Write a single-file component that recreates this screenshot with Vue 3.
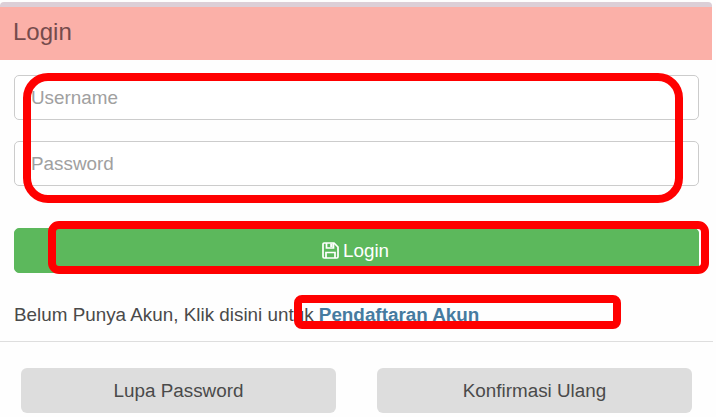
<script setup>
import { ref } from 'vue'

const form = ref({ username: '', password: '' })

function handleLogin() {
  form.value.password = ''
}
</script>

<template>
  <div class="login-page">
    <form class="panel" @submit.prevent="handleLogin">
      <div class="panel-heading">Login</div>
      <div class="panel-body">
        <input
          v-model="form.username"
          class="form-control"
          type="text"
          placeholder="Username"
        />
        <input
          v-model="form.password"
          class="form-control"
          type="password"
          placeholder="Password"
        />
        <button class="btn-login" type="submit">
          <svg class="icon-save" viewBox="0 0 17 17">
            <path
              d="M1 2.2V14.8Q1 16 2.2 16H14.8Q16 16 16 14.8V5L12 1H2.2Q1 1 1 2.2Z"
            />
            <path d="M4 16V10.5H13V16M4.5 1V6H11.5V1" />
            <path class="shutter" d="M8.2 1.5H10.6V5H8.2Z" />
          </svg>
          <span>Login</span>
        </button>
        <p class="register">
          Belum Punya Akun, Klik disini untuk
          <a class="register-link">Pendaftaran Akun</a>
        </p>
      </div>
    </form>
    <div class="actions">
      <button class="btn-default">Lupa Password</button>
      <button class="btn-default">Konfirmasi Ulang</button>
    </div>

    <!-- Highlight frames over the form -->
    <div class="mark mark-fields" />
    <div class="mark mark-login" />
    <div class="mark mark-register" />
  </div>
</template>

<style>
body {
  margin: 0;
  background: #fefefe;
}
</style>

<style scoped>
* {
  box-sizing: border-box;
}

.login-page {
  position: relative;
  width: 716px;
  height: 417px;
  padding-top: 2px;
  overflow: hidden;
  font-family: 'Liberation Sans', Arial, sans-serif;
  font-size: 18.85px;
  color: #4a4a4a;
}

.panel {
  width: 713px;
  height: 340px;
  border-bottom: 1px solid #dedede;
}

.panel-heading {
  width: 712px;
  height: 58px;
  padding-left: 13px;
  border-top: 5px solid #dccfd7;
  border-radius: 4px 4px 0 0;
  background: #fbb0a8;
  color: #754b4c;
  font-size: 24px;
  line-height: 49px;
}

.panel-body {
  display: flex;
  flex-direction: column;
  width: 699px;
  padding: 15px 0 0 14px;
}

.form-control {
  width: 100%;
  height: 45px;
  margin-bottom: 21px;
  padding: 0 16px;
  border: 1px solid #cccccc;
  border-radius: 5px;
  background: #fff;
  font: inherit;
  outline: none;
}

.form-control::placeholder {
  color: #a0a0a0;
  opacity: 1;
}

.btn-login {
  display: flex;
  align-items: center;
  justify-content: center;
  gap: 4px;
  height: 45px;
  margin-top: 21px;
  padding: 0 2px 0 0;
  border: 1px solid #5cb85c;
  border-radius: 5px;
  background: #5cb85c;
  color: #fff;
  font: inherit;
}

.icon-save {
  width: 17px;
  height: 17px;
  fill: none;
  stroke: #fff;
  stroke-width: 1.7;
}

.icon-save .shutter {
  fill: #fff;
  stroke: none;
}

.register {
  margin: 31px 0 0;
  line-height: 22px;
  white-space: nowrap;
}

.register-link {
  color: #467ba0;
  font-weight: bold;
}

.actions {
  display: flex;
  gap: 41px;
  padding: 26px 0 0 21px;
}

.btn-default {
  width: 315px;
  height: 45px;
  padding: 0;
  border: none;
  border-radius: 6px;
  background: #dddddd;
  color: #4a4a4a;
  font: inherit;
}

.mark {
  position: absolute;
  border: 8px solid #ff0000;
  pointer-events: none;
}

.mark-fields {
  top: 73px;
  left: 23px;
  width: 660px;
  height: 130px;
  border-radius: 25px;
}

.mark-login {
  top: 221px;
  left: 48px;
  width: 661px;
  height: 53px;
  border-radius: 11px;
}

.mark-register {
  top: 295px;
  left: 294px;
  width: 327px;
  height: 34px;
  border-radius: 8px;
}
</style>
